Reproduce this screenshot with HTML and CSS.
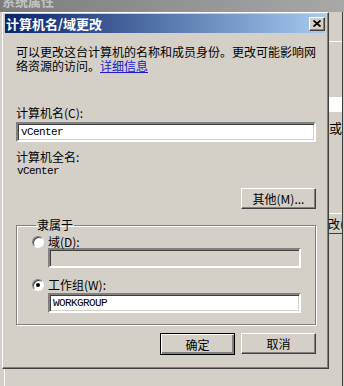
FILE: index.html
```html
<!DOCTYPE html>
<html lang="zh-CN">
<head>
    <meta charset="UTF-8">
    <title>计算机名/域更改</title>
    <link rel="stylesheet" href="styles.css">
</head>
<body>
    <div class="parent-title"><span>系统属性</span></div>
    <div class="stage">
        <div class="left-col">
            <div class="dialog">
                <div class="titlebar">
                    <span class="title">计算机名/域更改</span>
                    <span class="close">
                        <svg width="8" height="7" viewBox="0 0 8 7"><path d="M0.5 0.5 L7.5 6.5 M7.5 0.5 L0.5 6.5" stroke="#000" stroke-width="1.8"/></svg>
                    </span>
                </div>
                <div class="body">
                    <p class="intro">可以更改这台计算机的名称和成员身份。更改可能影响网<br>络资源的访问。<a href="#">详细信息</a></p>

                    <label class="label name-label">计算机名(C):</label>
                    <div class="field">vCenter</div>

                    <div class="label full-label">计算机全名:</div>
                    <div class="full-name">vCenter</div>

                    <div class="more-row">
                        <button class="btn">其他(M)...</button>
                    </div>

                    <fieldset class="group">
                        <legend>隶属于</legend>
                        <div class="radio-row">
                            <span class="radio"></span>
                            <span>域(D):</span>
                        </div>
                        <div class="field sub disabled"></div>
                        <div class="radio-row second">
                            <span class="radio checked"><span class="dot"></span></span>
                            <span>工作组(W):</span>
                        </div>
                        <div class="field sub">WORKGROUP</div>
                    </fieldset>

                    <div class="actions">
                        <button class="btn default">确定</button>
                        <button class="btn">取消</button>
                    </div>
                </div>
            </div>
            <div class="below"></div>
        </div>
        <div class="strip">
            <div class="strip-line"></div>
            <div class="strip-box"></div>
            <div class="strip-text">或</div>
            <div class="strip-btn">改(</div>
        </div>
    </div>
</body>
</html>
```
FILE: styles.css
```css
body {
    margin: 0;
    width: 344px;
    height: 386px;
    overflow: hidden;
    background-color: #d4d0c8;
    font-family: "Noto Sans CJK SC", "Liberation Sans", sans-serif;
    font-size: 12px;
    color: #000;
}

.parent-title {
    height: 12px;
    overflow: hidden;
    background: linear-gradient(to right, #7c7c7c, #a8a8a8);
    padding-left: 2px;
}

.parent-title span {
    display: block;
    margin-top: -6px;
    font-size: 13px;
    font-weight: bold;
    line-height: 14px;
    color: #c4c4c4;
}

.stage {
    display: flex;
    height: 374px;
}

.left-col {
    width: 329px;
    display: flex;
    flex-direction: column;
}

.dialog {
    flex: none;
    box-sizing: border-box;
    height: 357px;
    margin-left: 2px;
    border: 1px solid;
    border-color: #fff #404040 #404040 #fff;
    box-shadow: inset -1px -1px 0 #808080;
    padding: 1px 2px 2px 2px;
}

.titlebar {
    height: 19px;
    display: flex;
    align-items: center;
    justify-content: space-between;
    padding: 0 1px 0 1px;
    background: linear-gradient(to right, #0a246a, #a6caf0);
}

.title {
    color: #fff;
    font-size: 13px;
    font-weight: bold;
    line-height: 19px;
}

.close {
    width: 14px;
    height: 12px;
    display: flex;
    align-items: center;
    justify-content: center;
    background-color: #d4d0c8;
    border: 1px solid;
    border-color: #fff #404040 #404040 #fff;
    box-shadow: inset -1px -1px 0 #808080;
}

.body {
    padding: 12px 10px 0 11px;
}

.intro {
    margin: 0;
    line-height: 14px;
    white-space: nowrap;
}

.intro a {
    color: #1a1ad0;
    text-decoration: underline;
}

.label {
    display: block;
    line-height: 14px;
}

.name-label {
    margin-top: 33px;
}

.field {
    height: 16px;
    margin-top: 2px;
    padding: 0 3px;
    background-color: #fff;
    border: 2px solid;
    border-color: #808080 #fff #fff #808080;
    box-shadow: inset 1px 1px 0 #404040, inset -1px -1px 0 #d4d0c8;
    font-family: "Liberation Mono", monospace;
    font-size: 11px;
    letter-spacing: -0.6px;
    line-height: 16px;
}

.full-label {
    margin-top: 8px;
}

.full-name {
    font-family: "Liberation Mono", monospace;
    font-size: 11px;
    letter-spacing: -0.6px;
    line-height: 14px;
    padding-left: 1px;
}

.more-row {
    display: flex;
    justify-content: flex-end;
    margin-top: 10px;
}

.btn {
    width: 75px;
    height: 21px;
    padding: 0;
    font-family: inherit;
    font-size: 12px;
    color: #000;
    background-color: #d4d0c8;
    border: 1px solid;
    border-color: #fff #404040 #404040 #fff;
    box-shadow: inset -1px -1px 0 #808080;
}

.btn.default {
    height: 22px;
    border-color: #000;
    box-shadow: inset 1px 1px 0 #fff, inset -2px -2px 0 #808080;
}

.group {
    margin: 9px 0 0 0;
    padding: 3px 14px 11px 15px;
    border: 1px solid #808080;
    box-shadow: 1px 1px 0 #fff, inset 1px 1px 0 #fff;
}

.group legend {
    padding: 0 1px;
    margin-left: 4px;
    line-height: 14px;
}

.radio-row {
    display: flex;
    align-items: center;
    gap: 4px;
    line-height: 13px;
    height: 13px;
}

.radio-row.second {
    margin-top: 10px;
}

.radio {
    width: 10px;
    height: 10px;
    border-radius: 50%;
    background-color: #fff;
    border: 1px solid;
    border-color: #808080 #fff #fff #808080;
    box-shadow: inset 1px 1px 0 #404040;
    display: flex;
    align-items: center;
    justify-content: center;
}

.dot {
    width: 4px;
    height: 4px;
    border-radius: 50%;
    background-color: #000;
}

.field.sub {
    margin-left: 16px;
    margin-top: 0;
}

.radio-row.second + .field.sub {
    margin-top: 2px;
}

.field.disabled {
    background-color: #d4d0c8;
}

.actions {
    display: flex;
    justify-content: flex-end;
    align-items: flex-start;
    gap: 6px;
    margin-top: 8px;
}

.below {
    flex: 1;
    margin-left: 4px;
    border-left: 1px solid #fff;
}

.strip {
    width: 13px;
    border-right: 1px solid #404040;
    margin-right: 1px;
    display: flex;
    flex-direction: column;
    overflow: hidden;
}

.strip-line {
    margin-top: 29px;
    height: 1px;
    background-color: #fff;
}

.strip-box {
    margin-top: 55px;
    height: 15px;
    background-color: #fff;
}

.strip-text {
    margin-top: 8px;
    line-height: 16px;
    font-size: 13px;
}

.strip-btn {
    margin-top: 77px;
    height: 19px;
    border-top: 1px solid #fff;
    border-bottom: 1px solid #404040;
    line-height: 19px;
    white-space: nowrap;
    margin-left: -1px;
}
```
